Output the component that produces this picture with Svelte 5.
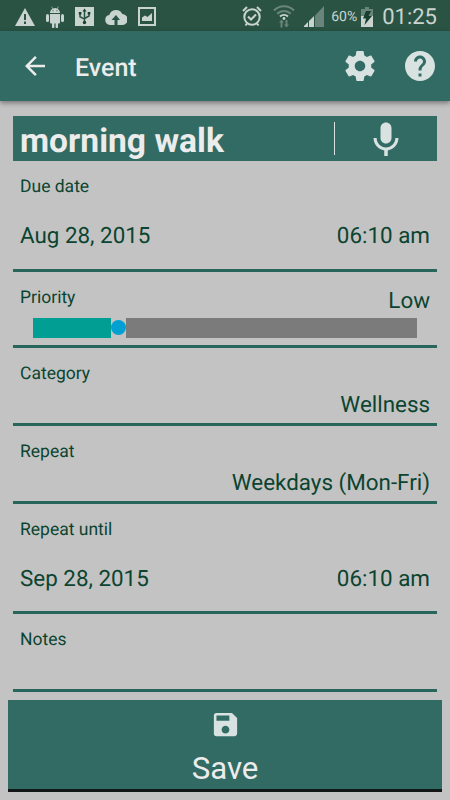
<script lang="ts">
  let title = $state("morning walk");
  let priority = $state(20.2);

  type Field = {
    label: string;
    value?: string;
    time?: string;
    kind: "date" | "slider" | "choice";
  };

  const fields: Field[] = [
    { label: "Due date", value: "Aug 28, 2015", time: "06:10 am", kind: "date" },
    { label: "Priority", value: "Low", kind: "slider" },
    { label: "Category", value: "Wellness", kind: "choice" },
    { label: "Repeat", value: "Weekdays (Mon-Fri)", kind: "choice" },
    { label: "Repeat until", value: "Sep 28, 2015", time: "06:10 am", kind: "date" },
    { label: "Notes", kind: "choice" },
  ];
</script>

<div class="screen">
  <div class="status-bar">
    <div class="notifications">
      <svg width="20" height="20" viewBox="0 0 20 20">
        <path fill-rule="evenodd" d="M10 1 20 19H0zM9 7v6h2V7zm0 7.5V17h2v-2.500z" />
      </svg>
      <svg width="18" height="22" viewBox="0 0 18 22">
        <path fill-rule="evenodd" d="M4 7c0-2 1-3.500 2.500-4.300L5.300.700l.5-.3L7 2.400a6 6 0 0 1 4 0L12.200.400l.5.3-1.200 2C13 3.500 14 5 14 7zM6.500 4.300v1h1v-1zm4 0v1h1v-1z" />
        <path d="M4 8h10v8.500a1 1 0 0 1-1 1h-1V21a1.200 1.200 0 0 1-2.400 0v-3.500H8.400V21A1.200 1.200 0 0 1 6 21v-3.500H5a1 1 0 0 1-1-1z" />
        <rect x="0" y="8" width="3" height="8" rx="1.500" />
        <rect x="15" y="8" width="3" height="8" rx="1.500" />
      </svg>
      <svg width="19" height="19" viewBox="0 0 19 19">
        <rect width="19" height="19" />
        <g class="cut-line">
          <path d="M9.500 3v12M5 6.500v3.200l4.500 2.500M14 6v3l-4.500 2.500" />
        </g>
        <path class="cut" d="m9.500 1.500 2 3h-4zM3.800 5h2.600v2.500H3.800zM12.700 5h2.600v2.500h-2.600z" />
        <circle class="cut" cx="9.500" cy="15.500" r="1.700" />
      </svg>
      <svg width="22" height="18" viewBox="0 0 22 18">
        <path d="M5 17a5 5 0 0 1-.7-9.900A7 7 0 0 1 17.300 6 5.500 5.500 0 0 1 17 17h-4.500v-5H15l-4-5-4.500 5h3v5z" />
      </svg>
      <svg width="18" height="19" viewBox="0 0 18 19">
        <path fill-rule="evenodd" d="M0 0h18v19H0zm2 2v15h14V2z" />
        <path d="M4 14v-3.500l3-2 2.500 1.500L14 6v8z" />
      </svg>
    </div>

    <div class="indicators">
      <svg width="20" height="21" viewBox="0 0 20 21">
        <g class="stroke">
          <circle cx="10" cy="11" r="7.700" />
          <path d="m1 5 4-4M19 5l-4-4M3.500 19.500 5 17.500M16.500 19.500 15 17.500M6 10.500l3 3 5-5" />
        </g>
      </svg>
      <svg class="wifi" width="22" height="23" viewBox="0 0 22 23">
        <g class="stroke">
          <path class="dim" d="M1 5.500a14 14 0 0 1 20 0M4.200 8.800a9.500 9.500 0 0 1 13.600 0" />
          <path d="M7 11.500a6 6 0 0 1 8 0" />
        </g>
        <circle cx="11" cy="13.500" r="1.400" />
        <path class="dim" d="m8.500 14.500 2.500 3H9.500v5h-2v-5H6zM13.500 22.500l-2.500-3h1.500v-4.500h2v4.500H16z" />
      </svg>
      <svg class="signal" width="20" height="21" viewBox="0 0 20 21">
        <path class="dim" d="M20 0v21h-9V9.500z" />
        <path d="M0 21v-1l4-4v5zM5 15l5-5v11H5z" />
      </svg>
      <span class="percent">60%</span>
      <svg class="battery" width="12" height="20" viewBox="0 0 12 20">
        <path class="dim" d="M4 0h4v2h4v7H0V2h4z" />
        <path d="M0 9h12v11H0z" />
        <path class="bolt" d="M5 4h5L7.500 9H11L3.500 18l1.500-6.500H2z" />
      </svg>
      <span class="clock">01:25</span>
    </div>
  </div>

  <header class="app-bar">
    <button class="icon-button back" type="button" aria-label="Back">
      <svg width="30" height="30" viewBox="0 0 24 24">
        <path d="M20 11H7.830l5.590-5.590L12 4l-8 8 8 8 1.410-1.410L7.830 13H20z" />
      </svg>
    </button>
    <h1>Event</h1>
    <button class="icon-button" type="button" aria-label="Settings">
      <svg width="36" height="36" viewBox="0 0 24 24">
        <path d="M19.430 12.980c.04-.32.07-.64.07-.98s-.03-.66-.07-.98l2.110-1.650c.19-.15.24-.42.12-.64l-2-3.460c-.12-.22-.39-.3-.61-.22l-2.490 1c-.52-.4-1.080-.73-1.690-.98l-.38-2.650A.488.488 0 0 0 14 2h-4c-.25 0-.46.18-.49.42l-.38 2.650c-.61.25-1.170.59-1.690.98l-2.490-1c-.23-.09-.49 0-.61.22l-2 3.460c-.13.22-.07.49.12.64l2.110 1.650c-.04.32-.07.65-.07.98s.03.66.07.98l-2.110 1.650c-.19.15-.24.42-.12.64l2 3.460c.12.22.39.3.61.22l2.490-1c.52.4 1.080.73 1.690.98l.38 2.650c.03.24.24.42.49.42h4c.25 0 .46-.18.49-.42l.38-2.650c.61-.25 1.170-.59 1.690-.98l2.490 1c.23.09.49 0 .61-.22l2-3.460c.12-.22.07-.49-.12-.64zM12 15.500c-1.930 0-3.500-1.570-3.500-3.500s1.570-3.500 3.500-3.500 3.500 1.570 3.500 3.500-1.570 3.500-3.500 3.500" />
      </svg>
    </button>
    <button class="icon-button help" type="button" aria-label="Help">
      <svg width="36" height="36" viewBox="0 0 24 24">
        <path d="M12 2C6.480 2 2 6.480 2 12s4.480 10 10 10 10-4.480 10-10S17.520 2 12 2m1 17h-2v-2h2zm2.070-7.750-.9.920C13.450 12.900 13 13.500 13 15h-2v-.5c0-1.100.45-2.100 1.170-2.830l1.240-1.260c.37-.36.59-.86.59-1.410 0-1.100-.9-2-2-2s-2 .9-2 2H8c0-2.210 1.790-4 4-4s4 1.790 4 4c0 .88-.36 1.680-.93 2.250" />
      </svg>
    </button>
  </header>

  <main>
    <div class="title-row">
      <div class="title">{title}</div>
      <button class="mic" type="button" aria-label="Dictate title">
        <svg width="44" height="44" viewBox="0 0 24 24">
          <path d="M12 14.500c1.660 0 3-1.340 3-3V6c0-1.660-1.340-3-3-3S9 4.340 9 6v5.500c0 1.660 1.340 3 3 3m5.100-3c0 3-2.350 5.100-5.100 5.100s-5.100-2.100-5.100-5.100H5.200c0 3.410 2.640 6.230 5.850 6.720V21.300h1.900v-3.080c3.210-.48 5.850-3.300 5.850-6.720z" />
        </svg>
      </button>
    </div>

    {#each fields as field}
      <section class="field {field.kind}">
        <div class="label">{field.label}</div>
        {#if field.value}
          <div class="values">
            <span>{field.value}</span>
            {#if field.time}
              <span>{field.time}</span>
            {/if}
          </div>
        {/if}
        {#if field.kind === "slider"}
          <div class="slider">
            <div class="slider-fill" style="width: {priority}%;"></div>
            <div class="slider-thumb"></div>
            <div class="slider-rest"></div>
          </div>
        {/if}
      </section>
    {/each}
  </main>

  <button class="save" type="button">
    <svg width="31" height="31" viewBox="0 0 24 24">
      <path d="M17 3H5a2 2 0 0 0-2 2v14a2 2 0 0 0 2 2h14c1.100 0 2-.9 2-2V7zm-5 16c-1.660 0-3-1.340-3-3s1.340-3 3-3 3 1.340 3 3-1.340 3-3 3m3-10H5V5h10z" />
    </svg>
    <span>Save</span>
  </button>
</div>

<style>
  :global(body) {
    margin: 0;
    background: #c3c3c3;
  }

  .screen {
    display: flex;
    flex-direction: column;
    width: 450px;
    height: 800px;
    overflow: hidden;
    background: #c3c3c3;
    color: #0b4430;
    font-family: Roboto, sans-serif;
    text-rendering: geometricPrecision;
  }

  svg {
    display: block;
    flex: none;
    fill: currentColor;
  }

  button {
    padding: 0;
    border: 0;
    background: none;
    color: inherit;
    font: inherit;
  }

  .status-bar {
    display: flex;
    justify-content: space-between;
    box-sizing: border-box;
    height: 31px;
    padding: 2px 13px 0 15px;
    background: #2a5343;
    color: #c9d3cf;
  }

  .notifications,
  .indicators {
    display: flex;
    align-items: center;
  }

  .notifications {
    gap: 11px;
  }

  .stroke {
    fill: none;
    stroke: currentColor;
    stroke-width: 2;
  }

  .dim {
    opacity: 0.4;
  }

  .cut,
  .bolt {
    fill: #173f30;
  }

  .cut-line {
    fill: none;
    stroke: #2a5343;
    stroke-width: 1.5;
  }

  .wifi {
    margin-left: 11px;
  }

  .signal {
    margin-left: 9px;
  }

  .percent {
    margin-left: 7px;
    padding-top: 1px;
    font-size: 14px;
  }

  .battery {
    margin-left: 4px;
  }

  .clock {
    margin-left: 9px;
    padding-top: 2px;
    font-size: 22px;
  }

  .app-bar {
    position: relative;
    display: flex;
    align-items: center;
    flex: none;
    height: 70px;
    padding: 0 12px 0 20px;
    box-sizing: border-box;
    background: #326b63;
    color: #d8e3e1;
    box-shadow: 0 2px 5px rgba(0, 0, 0, 0.4);
  }

  h1 {
    flex: 1;
    margin: 0 0 0 25px;
    padding-top: 5px;
    font-size: 25px;
    font-weight: 500;
    line-height: 30px;
    color: #ececec;
  }

  .back {
    color: #ececec;
  }

  .help {
    margin-left: 24px;
  }

  main {
    flex: none;
    margin: 15px 13px 0;
  }

  .title-row {
    display: flex;
    align-items: center;
    height: 45px;
    background: #326b63;
    color: #ececec;
  }

  .title {
    flex: 1;
    padding: 6px 0 0 7px;
    font-size: 33.6px;
    font-weight: 700;
    line-height: 42px;
  }

  .mic {
    display: flex;
    justify-content: center;
    width: 103px;
    height: 33px;
    align-items: center;
    border-left: 1px solid #d8e3e1;
    color: #d8e3e1;
  }

  .field {
    box-sizing: border-box;
    height: 78px;
    padding: 16px 7px 0;
    border-bottom: 3px solid #28665c;
  }

  .date {
    height: 110.5px;
  }

  .label {
    font-size: 17.5px;
    line-height: 20px;
  }

  .values {
    display: flex;
    justify-content: flex-end;
    margin-top: 7px;
    font-size: 22.4px;
    line-height: 28px;
  }

  .date .values {
    justify-content: space-between;
    margin-top: 25px;
  }

  .field.slider {
    display: grid;
    grid-template-columns: 1fr auto;
    grid-template-rows: 30px 20px;
    height: 76px;
  }

  .field.slider .values {
    margin-top: -1px;
  }

  div.slider {
    display: flex;
    align-items: center;
    grid-column: 1 / -1;
    margin: 0 13px;
  }

  .slider-fill {
    height: 20px;
    background: #009e93;
  }

  .slider-thumb {
    flex: none;
    width: 15px;
    height: 15px;
    border-radius: 50%;
    background: #00a0d2;
  }

  .slider-rest {
    flex: 1;
    height: 20px;
    background: #7b7b7b;
  }

  .save {
    display: flex;
    flex-direction: column;
    align-items: center;
    box-sizing: border-box;
    flex: none;
    height: 92px;
    margin: 8px 8px 0;
    padding-top: 9px;
    border-bottom: 3px solid #111817;
    background: #326b63;
    color: #d8e3e1;
  }

  .save span {
    margin-top: 10px;
    font-size: 31.2px;
    line-height: 38px;
    color: #ececec;
  }
</style>
